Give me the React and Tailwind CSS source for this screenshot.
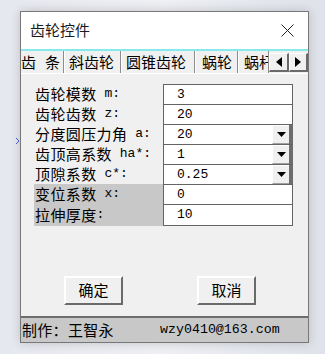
import React from "react";

const cjk = { fontFamily: '"Noto Sans CJK SC", "Noto Sans", sans-serif' };
const mono = { fontFamily: '"Liberation Mono", "DejaVu Sans Mono", monospace' };

const rows = [
  { label: "齿轮模数", ascii: " m:", value: "3" },
  { label: "齿轮齿数", ascii: " z:", value: "20" },
  { label: "分度圆压力角", ascii: " a:", value: "20", combo: true },
  { label: "齿顶高系数", ascii: " ha*:", value: "1", combo: true },
  { label: "顶隙系数", ascii: " c*:", value: "0.25", combo: true },
  { label: "变位系数", ascii: " x:", value: "0", shaded: true },
  { label: "拉伸厚度", ascii: ":", value: "10", shaded: true },
];

const tabs = [
  { text: ["齿", "条"], w: "w-[43px]", pl: "pl-0" },
  { text: ["斜齿轮"], w: "w-[57px]", pl: "pl-[4px]" },
  { text: ["圆锥齿轮"], w: "w-[74px]", pl: "pl-[4px]" },
  { text: ["蜗轮"], w: "w-[43px]", pl: "pl-[6px]" },
  { text: ["蜗杆"], w: "w-[31px]", pl: "pl-[5px]" },
];

function Arrow({ dir }) {
  return (
    <svg width="6" height="10" viewBox="0 0 6 10">
      {dir === "left" ? <polygon points="6,0 6,10 0,5" fill="#000" /> : <polygon points="0,0 0,10 6,5" fill="#000" />}
    </svg>
  );
}

function FormRow({ row, last }) {
  const h = last ? "h-[22px]" : "h-[20px]";
  return (
    <>
      <div className={`${h} flex items-center pl-[1px] text-[15px] text-black whitespace-pre ${row.shaded ? "bg-[#c8c8c8]" : ""}`} style={cjk}>
        <span className="tracking-[0.4px]">{row.label}</span>
        <span className="text-[13px]" style={mono}>{row.ascii}</span>
      </div>
      {row.combo ? (
        <div className={`${h} flex border-t border-l border-[#646464]`}>
          <div className="flex-1 bg-white flex items-center pl-[13px] text-[13px] text-black" style={mono}>{row.value}</div>
          <div className="w-[17px] bg-[#f0f0f0] border-t border-l border-white border-b border-b-[#a0a0a0] flex items-center justify-center">
            <svg width="9" height="5" viewBox="0 0 9 5">
              <polygon points="0,0 9,0 4.5,5" fill="#000" />
            </svg>
          </div>
          <div className="w-[4px] bg-[#6d6d6d]" />
        </div>
      ) : (
        <div className={`${h} bg-white flex items-center pl-[13px] text-[13px] text-black border-t border-l border-r border-[#646464] ${last ? "border-b" : ""}`} style={mono}>
          {row.value}
        </div>
      )}
    </>
  );
}

function Btn({ children }) {
  return (
    <div className="w-[59px] h-[29px] bg-[#f0f0f0] border-t-2 border-l-2 border-t-white border-l-white border-b-2 border-r-2 border-b-[#6a6a6a] border-r-[#6a6a6a] flex items-center justify-center text-[15px] text-black" style={cjk}>
      {children}
    </div>
  );
}

export default function App() {
  return (
    <div className="w-[325px] h-[354px] overflow-hidden relative bg-[linear-gradient(90deg,#e6e8ef,#eef0f4_50%,#dfe2ea)] pt-[11px] pl-[20px]">
      <svg className="absolute left-[15px] top-[137px]" width="6" height="8" viewBox="0 0 6 8">
        <polyline points="1,1 4,4 1,7" fill="none" stroke="#4a5bd0" strokeWidth="1" />
      </svg>
      <div className="w-[289px] h-[332px] border border-[#777] bg-[#f0f0f0] flex flex-col shadow-[0_0_10px_rgba(0,0,0,0.18)]">
        {/* title bar */}
        <div className="h-[37px] bg-white flex items-center justify-between pl-[9px] pr-[14px]">
          <span className="text-[15px] text-[#1a1a1a]" style={cjk}>齿轮控件</span>
          <svg width="13" height="13" viewBox="0 0 13 13">
            <path d="M0.5 0.5 L12.5 12.5 M12.5 0.5 L0.5 12.5" stroke="#222" strokeWidth="1" />
          </svg>
        </div>
        <div className="h-[2px] bg-[#86e9ec]" />
        {/* tabs */}
        <div className="h-[22px] flex bg-[#f0f0f0]">
          {tabs.map((t, i) => (
            <div
              key={i}
              className={`${t.w} ${t.pl} h-full flex items-center gap-[9px] overflow-hidden whitespace-pre text-[15px] text-black border-r border-r-[#8c8c8c] ${i > 0 ? "border-l border-l-white" : ""}`}
              style={cjk}
            >
              {t.text.map((s, j) => (
                <span key={j} className="shrink-0">{s}</span>
              ))}
            </div>
          ))}
          <div className="w-[20px] mt-[2px] h-[19px] bg-[#f0f0f0] border-t border-l border-white border-b-2 border-r-2 border-b-[#6a6a6a] border-r-[#6a6a6a] flex items-center justify-center">
            <Arrow dir="left" />
          </div>
          <div className="w-[19px] mt-[2px] h-[19px] bg-[#f0f0f0] border-t border-l border-white border-b-2 border-r-2 border-b-[#6a6a6a] border-r-[#6a6a6a] flex items-center justify-center">
            <Arrow dir="right" />
          </div>
        </div>
        {/* panel */}
        <div className="h-[243px] border-t border-white pt-[10px] flex flex-col">
          <div className="ml-[13px] grid grid-cols-[129px_130px]">
            {rows.map((r, i) => (
              <FormRow key={i} row={r} last={i === rows.length - 1} />
            ))}
          </div>
          <div className="mt-[50px] flex pl-[43px] gap-[74px]">
            <Btn>确定</Btn>
            <Btn>取消</Btn>
          </div>
        </div>
        {/* status */}
        <div className="flex-1 bg-[#c8c8c8] border-t-2 border-[#6d6d6d] flex items-center">
          <span className="pl-[1px] text-[15px] text-black w-[139px] tracking-[0.3px]" style={cjk}>制作：王智永</span>
          <span className="text-[13.3px] text-black" style={mono}>wzy0410@163.com</span>
        </div>
      </div>
    </div>
  );
}
